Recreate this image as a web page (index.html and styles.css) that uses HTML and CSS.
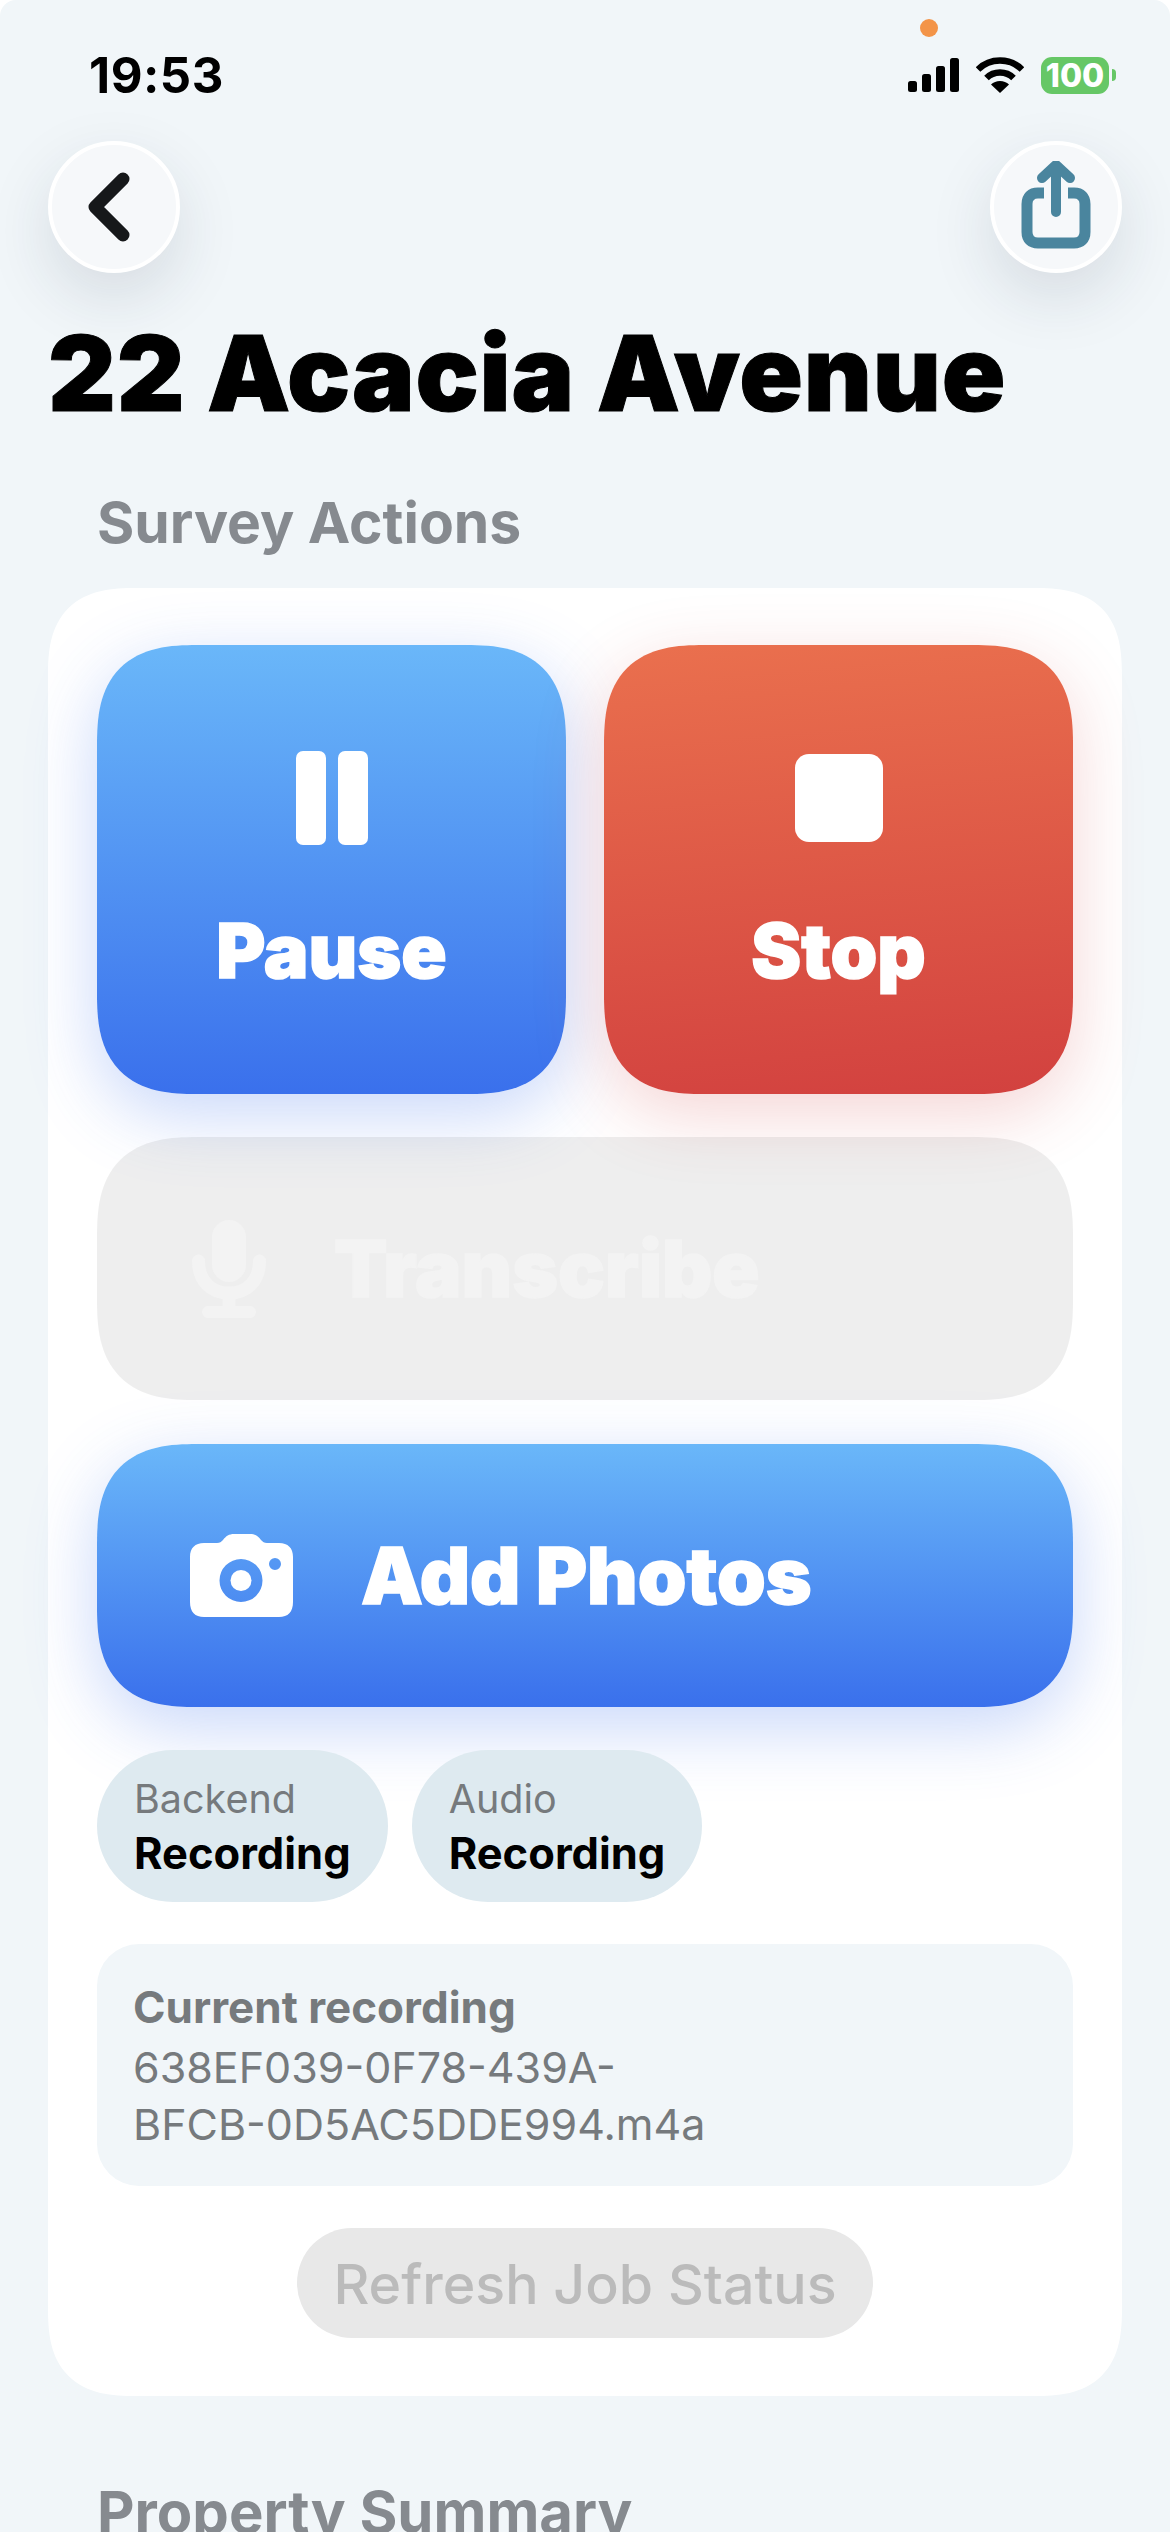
FILE: index.html
```html
<!DOCTYPE html>
<html>
<head>
    <title>22 Acacia Avenue</title>
    <link rel="stylesheet" href="styles.css">
</head>
<body>
    <div class="status-bar">
        <span class="time">19:53</span>
        <span class="mic-dot"></span>
        <div class="status-icons">
            <svg class="signal" viewBox="0 0 51 34" width="51" height="34">
                <rect x="0" y="23" width="9" height="11" rx="2.5"/>
                <rect x="14" y="16" width="9" height="18" rx="2.5"/>
                <rect x="28" y="8" width="9" height="26" rx="2.5"/>
                <rect x="42" y="0" width="9" height="34" rx="2.5"/>
            </svg>
            <svg class="wifi" viewBox="0 0 48 36" width="48" height="36">
                <path d="M2 12.5C7.5 7 15.5 3.5 24 3.5S40.500 7 46 12.500" fill="none" stroke="#000" stroke-width="6.500"/>
                <path d="M10.500 21C14 17.500 18.800 15.500 24 15.500S34 17.500 37.500 21" fill="none" stroke="#000" stroke-width="6.500"/>
                <path d="M24 36L15 27.500C17.300 25.300 20.500 24 24 24S30.700 25.300 33 27.500Z"/>
            </svg>
            <div class="battery">
                <span class="battery-body">100</span>
                <span class="battery-nub"></span>
            </div>
        </div>
    </div>

    <div class="nav-row">
        <button class="round-btn">
            <svg class="back-icon" viewBox="0 0 42 70" width="42" height="70">
                <path d="M35 7L7 35L35 63" fill="none" stroke="#16181a" stroke-width="13" stroke-linecap="round" stroke-linejoin="round"/>
            </svg>
        </button>
        <button class="round-btn">
            <svg class="share-icon" viewBox="0 0 70 88" width="70" height="88">
                <path d="M23 32H17C10 32 6 36 6 43V71C6 78 10 82 17 82H53C60 82 64 78 64 71V43C64 36 60 32 53 32H47" fill="none" stroke="#4a859e" stroke-width="11"/>
                <path d="M35 51V5M21 17L35 4L49 17" fill="none" stroke="#4a859e" stroke-width="10" stroke-linecap="round" stroke-linejoin="round"/>
            </svg>
        </button>
    </div>

    <h1 class="page-title">22 Acacia Avenue</h1>

    <h2 class="section-label">Survey Actions</h2>

    <div class="card">
        <div class="btn-pair">
            <button class="action-tile tile-blue">
                <span class="pause-icon"><i></i><i></i></span>
                <span class="action-text">Pause</span>
            </button>
            <button class="action-tile tile-red">
                <span class="stop-icon"></span>
                <span class="action-text">Stop</span>
            </button>
        </div>

        <button class="wide-btn wide-disabled">
            <svg class="wide-icon mic-icon" viewBox="0 0 74 98" width="74" height="98">
                <rect x="20" y="0" width="34" height="62" rx="17" fill="#f3f3f3"/>
                <path d="M6.500 41C6.500 60 18 73 37 73S67.500 60 67.500 41" fill="none" stroke="#f3f3f3" stroke-width="13" stroke-linecap="round"/>
                <path d="M37 73V88" stroke="#f3f3f3" stroke-width="13"/>
                <rect x="10" y="86" width="54" height="12" rx="6" fill="#f3f3f3"/>
            </svg>
            <span class="action-text">Transcribe</span>
        </button>

        <button class="wide-btn tile-blue">
            <svg class="wide-icon" viewBox="0 0 103 83" width="103" height="83">
                <path fill="#fff" fill-rule="evenodd" d="M14 9H27C30 9 31 8 33 6C36 2 39 0 44 0H60C65 0 68 2 71 6C73 8 74 9 77 9H89C98 9 103 14 103 23V68C103 78 98 83 89 83H14C5 83 0 78 0 68V23C0 14 5 9 14 9ZM51 25A21.500 21.500 0 1 0 51 68A21.500 21.500 0 1 0 51 25ZM85 24A6 6 0 1 0 85 36A6 6 0 1 0 85 24Z"/>
                <circle cx="51" cy="46.500" r="10.500" fill="#fff"/>
            </svg>
            <span class="action-text">Add Photos</span>
        </button>

        <div class="chips">
            <div class="chip">
                <span class="chip-label">Backend</span>
                <span class="chip-value">Recording</span>
            </div>
            <div class="chip">
                <span class="chip-label">Audio</span>
                <span class="chip-value">Recording</span>
            </div>
        </div>

        <div class="recording-box">
            <div class="recording-title">Current recording</div>
            <div class="recording-file">638EF039-0F78-439A-<br>BFCB-0D5AC5DDE994.m4a</div>
        </div>

        <button class="refresh-btn">Refresh Job Status</button>
    </div>

    <h2 class="section-label section-next">Property Summary</h2>
</body>
</html>
```

FILE: styles.css
```css
html {
    background: #fff;
}

body {
    position: relative;
    height: 2532px;
    margin: 0;
    padding: 0 48px;
    box-sizing: border-box;
    overflow: hidden;
    background: #f1f6f9;
    border-radius: 16px 16px 0 0;
    font-family: Inter, sans-serif;
}

button {
    border: none;
    padding: 0;
    font-family: inherit;
}

/* status bar */
.status-bar {
    display: flex;
    align-items: center;
    justify-content: space-between;
    height: 36px;
    padding: 57px 6px 0 41px;
}

.time {
    font-size: 49px;
    font-weight: 700;
    letter-spacing: 0.5px;
    color: #000;
}

.mic-dot {
    position: absolute;
    left: 920px;
    top: 19px;
    width: 18px;
    height: 18px;
    border-radius: 50%;
    background: #f39448;
}

.status-icons {
    display: flex;
    align-items: center;
    gap: 17px;
}

.battery {
    display: flex;
    align-items: center;
    gap: 3px;
}

.battery-body {
    width: 68px;
    height: 37px;
    border-radius: 11px;
    background: #66c766;
    color: #fff;
    font-size: 32px;
    font-weight: 800;
    line-height: 37px;
    text-align: center;
}

.battery-nub {
    width: 4px;
    height: 12px;
    border-radius: 0 4px 4px 0;
    background: #66c766;
}

/* nav */
.nav-row {
    display: flex;
    justify-content: space-between;
    margin-top: 48px;
}

.round-btn {
    display: flex;
    align-items: center;
    justify-content: center;
    width: 132px;
    height: 132px;
    box-sizing: border-box;
    border: 4px solid #fff;
    border-radius: 50%;
    background: #f6f8fa;
    box-shadow: 0 24px 64px rgba(30, 50, 70, 0.13);
}

.back-icon {
    margin-right: 10px;
}

.share-icon {
    margin-top: -4px;
}

.page-title {
    margin: 38px 0 0 0;
    font-size: 105px;
    line-height: 124px;
    font-weight: 900;
    letter-spacing: 0.8px;
    -webkit-text-stroke: 1px #000;
    color: #000;
    white-space: nowrap;
}

.section-label {
    margin: 54px 0 0 49px;
    font-size: 57px;
    line-height: 68px;
    font-weight: 700;
    color: #868a8f;
}

.section-next {
    margin-top: 82px;
    font-size: 58px;
}

/* main card */
.card {
    display: flex;
    flex-direction: column;
    align-items: flex-start;
    height: 1808px;
    margin-top: 31px;
    padding: 57px 49px 0;
    box-sizing: border-box;
    border-radius: 88px;
    corner-shape: superellipse(1.4);
    background: #fff;
}

.btn-pair {
    display: flex;
    gap: 38px;
    width: 100%;
}

.action-tile {
    display: flex;
    flex: 1;
    flex-direction: column;
    align-items: center;
    height: 449px;
    padding-top: 106px;
    box-sizing: border-box;
    border-radius: 100px;
    corner-shape: superellipse(1.4);
}

.tile-blue {
    background: linear-gradient(180deg, #6ab7f9, #3a70ec);
    box-shadow: 0 20px 70px rgba(58, 112, 236, 0.28);
}

.tile-red {
    background: linear-gradient(175deg, #ea704e, #d2413f);
    box-shadow: 0 20px 70px rgba(210, 65, 63, 0.22);
}

.action-text {
    font-size: 78px;
    line-height: 88px;
    font-weight: 900;
    color: #fff;
    -webkit-text-stroke: 1.5px #fff;
}

.pause-icon {
    display: flex;
    gap: 12px;
    height: 94px;
}

.pause-icon i {
    width: 30px;
    border-radius: 7px;
    background: #fff;
}

.stop-icon {
    width: 88px;
    height: 88px;
    margin: 3px 0;
    border-radius: 14px;
    background: #fff;
}

.action-tile .action-text {
    margin-top: 62px;
    font-size: 75px;
}

.wide-btn {
    display: flex;
    align-items: center;
    width: 100%;
    height: 263px;
    margin-top: 43px;
    padding-left: 93px;
    box-sizing: border-box;
    border-radius: 100px;
    corner-shape: superellipse(1.4);
}

.wide-btn.tile-blue {
    margin-top: 44px;
}

.wide-icon {
    flex-shrink: 0;
    margin-right: 68px;
}

.mic-icon {
    margin-left: 2px;
}

.wide-disabled {
    background: rgba(0, 0, 0, 0.066);
}

.wide-disabled .action-text {
    color: #f3f3f3;
    -webkit-text-stroke-color: #f3f3f3;
}

/* status chips */
.chips {
    display: flex;
    gap: 24px;
    margin-top: 43px;
}

.chip {
    display: flex;
    flex-direction: column;
    justify-content: center;
    height: 152px;
    padding: 0 37px;
    border-radius: 76px;
    background: #deeaf0;
}

.chip-label {
    font-size: 39.5px;
    line-height: 54px;
    color: #767a7d;
}

.chip-value {
    font-size: 43.5px;
    line-height: 54px;
    font-weight: 700;
    color: #000;
}

.recording-box {
    width: 100%;
    height: 242px;
    margin-top: 42px;
    padding: 31px 36px 0;
    box-sizing: border-box;
    border-radius: 42px;
    background: #f1f6f9;
    color: #767a7d;
}

.recording-title {
    font-size: 44px;
    line-height: 64px;
    font-weight: 700;
}

.recording-file {
    font-size: 43px;
    line-height: 57px;
}

.refresh-btn {
    align-self: center;
    width: 576px;
    height: 110px;
    margin-top: 42px;
    border-radius: 55px;
    background: #e8e8e8;
    color: #bbb;
    font-size: 55.5px;
    font-weight: 500;
}
```
